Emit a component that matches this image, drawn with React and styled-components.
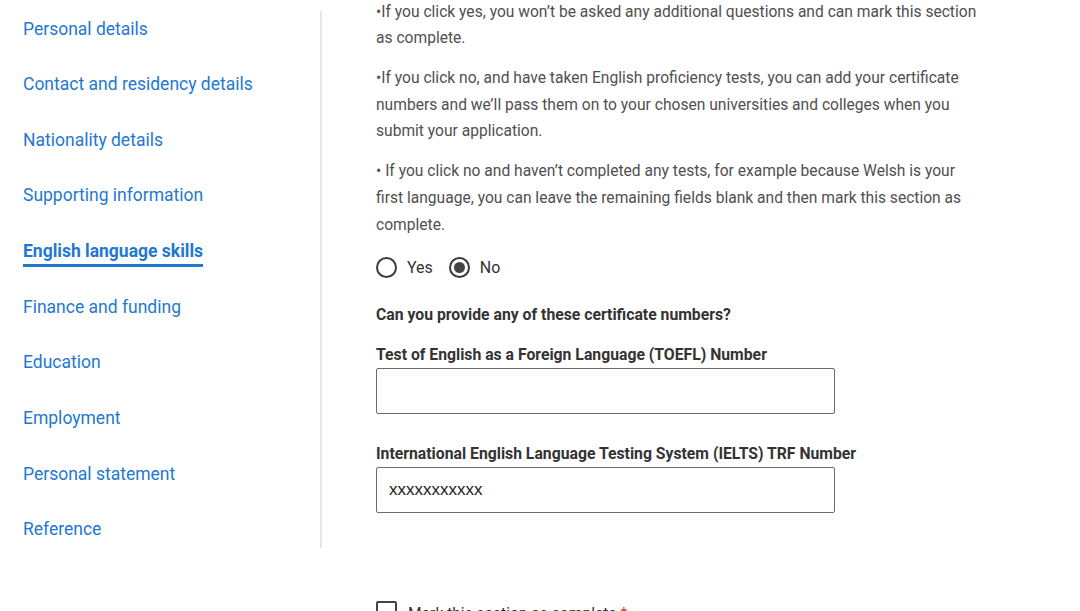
import React from "react";
import styled, { createGlobalStyle } from "styled-components";

const Global = createGlobalStyle`
  html, body { margin: 0; padding: 0; background: #fff; }
  body { font-family: Roboto, "Liberation Sans", Arial, sans-serif; overflow: hidden; }
  * { box-sizing: border-box; }
`;

const Page = styled.div`
  display: flex;
  align-items: flex-start;
  width: 1080px;
  height: 611px;
  overflow: hidden;
`;

const Sidebar = styled.nav`
  width: 322px;
  flex: none;
  margin-top: 11px;
  padding: 1px 0 1.5px 23px;
  border-right: 2px solid #e6e6e6;
`;

const NavList = styled.ul`
  list-style: none;
  margin: 0;
  padding: 0;
  display: flex;
  flex-direction: column;
  gap: 21.67px;
`;

const NavItem = styled.li`
  height: 34px;
  display: flex;
  align-items: center;
`;

const NavLink = styled.a`
  font-size: 17.5px;
  line-height: 21px;
  color: #1f78d1;
  text-decoration: none;
  font-weight: ${(p) => (p.$active ? 700 : 400)};
  padding-bottom: ${(p) => (p.$active ? "2px" : "0")};
  border-bottom: ${(p) => (p.$active ? "3px solid #1f78d1" : "none")};
  margin-bottom: ${(p) => (p.$active ? "-5px" : "0")};
`;

const Main = styled.main`
  margin-top: -1.3px;
  padding-left: 54px;
  width: 660px;
`;

const Para = styled.p`
  margin: 0 0 13.4px;
  font-size: 15.6px;
  font-weight: 400;
  line-height: 26.6px;
  color: #505050;
  max-width: 604px;
`;

const RadioRow = styled.div`
  display: flex;
  align-items: center;
  gap: 16px;
  margin-top: 18px;
  height: 22px;
`;

const RadioLabel = styled.label`
  display: flex;
  align-items: center;
  gap: 10px;
  font-size: 16px;
  color: #333;
`;

const RadioCircle = styled.span`
  width: 21px;
  height: 21px;
  border-radius: 50%;
  border: 2px solid #3a3a3a;
  display: flex;
  align-items: center;
  justify-content: center;
  &::after {
    content: "";
    width: 11px;
    height: 11px;
    border-radius: 50%;
    background: ${(p) => (p.$checked ? "#444" : "transparent")};
  }
`;

const Question = styled.h3`
  margin: 26px 0 0;
  font-size: 15.75px;
  line-height: 22px;
  font-weight: 700;
  color: #333;
`;

const Field = styled.div`
  margin-top: ${(p) => p.$top}px;
  display: flex;
  flex-direction: column;
`;

const FieldLabel = styled.label`
  font-size: 15.75px;
  line-height: 22px;
  font-weight: 700;
  color: #333;
  margin-bottom: 2px;
`;

const TextInput = styled.div`
  width: 459px;
  height: 46px;
  border: 1px solid #6b6b6b;
  border-radius: 2px;
  padding: 0 12px;
  display: flex;
  align-items: center;
  font-family: "Liberation Sans", Arial, sans-serif;
  font-size: 17px;
  color: #222;
`;

const CompleteRow = styled.label`
  margin-top: 88px;
  display: flex;
  align-items: flex-start;
  gap: 11px;
  font-size: 15.6px;
  line-height: 21px;
  color: #333;
`;

const Box = styled.span`
  width: 21px;
  height: 21px;
  border: 2px solid #444;
  border-radius: 2px;
  flex: none;
`;

const CompleteText = styled.span`
  padding-top: 3px;
`;

const Req = styled.span`
  color: #d4351c;
`;

const navItems = [
  "Personal details",
  "Contact and residency details",
  "Nationality details",
  "Supporting information",
  "English language skills",
  "Finance and funding",
  "Education",
  "Employment",
  "Personal statement",
  "Reference",
];

export default function App() {
  return (
    <>
      <Global />
      <Page>
        <Sidebar>
          <NavList>
            {navItems.map((n) => (
              <NavItem key={n}>
                <NavLink href="#" $active={n === "English language skills"}>
                  {n}
                </NavLink>
              </NavItem>
            ))}
          </NavList>
        </Sidebar>
        <Main>
          <Para>
            •If you click yes, you won’t be asked any additional questions and can mark this section as complete.
          </Para>
          <Para>
            •If you click no, and have taken English proficiency tests, you can add your certificate numbers and we’ll pass them on to your chosen universities and colleges when you submit your application.
          </Para>
          <Para>
            • If you click no and haven’t completed any tests, for example because Welsh is your first language, you can leave the remaining fields blank and then mark this section as complete.
          </Para>
          <RadioRow>
            <RadioLabel>
              <RadioCircle />
              Yes
            </RadioLabel>
            <RadioLabel>
              <RadioCircle $checked />
              No
            </RadioLabel>
          </RadioRow>
          <Question>Can you provide any of these certificate numbers?</Question>
          <Field $top={18}>
            <FieldLabel>Test of English as a Foreign Language (TOEFL) Number</FieldLabel>
            <TextInput />
          </Field>
          <Field $top={29}>
            <FieldLabel>International English Language Testing System (IELTS) TRF Number</FieldLabel>
            <TextInput>xxxxxxxxxxx</TextInput>
          </Field>
          <CompleteRow>
            <Box />
            <CompleteText>
              Mark this section as complete <Req>*</Req>
            </CompleteText>
          </CompleteRow>
        </Main>
      </Page>
    </>
  );
}
